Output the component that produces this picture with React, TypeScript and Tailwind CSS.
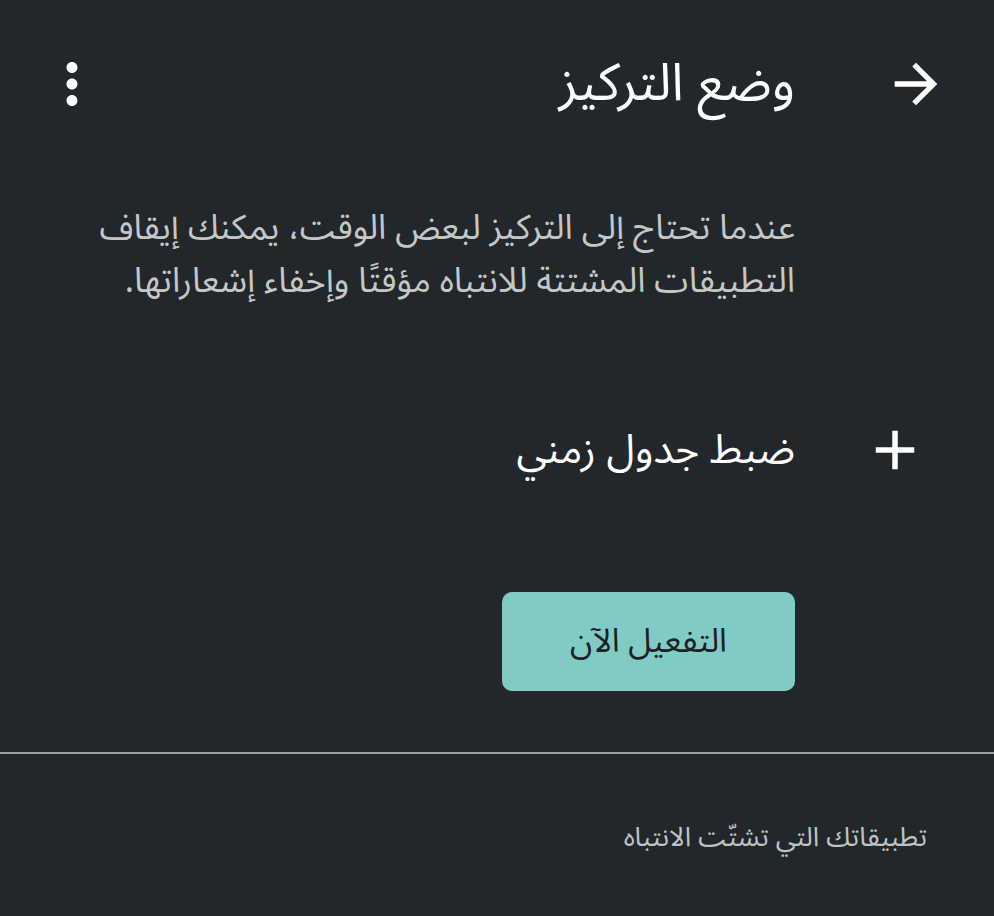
import React from "react";

const font = { fontFamily: '"Noto Sans Arabic", "Noto Sans", "DejaVu Sans", sans-serif' };

function ArrowIcon() {
  return (
    <svg viewBox="0 0 24 24" className="w-[64px] h-[64px]" fill="#ffffff">
      <path d="M12 4l-1.41 1.41L16.17 11H4v2h12.17l-5.58 5.59L12 20l8-8z" />
    </svg>
  );
}

function PlusIcon() {
  return (
    <svg viewBox="0 0 24 24" className="w-[66px] h-[66px]" fill="#ffffff">
      <path d="M19 13h-6v6h-2v-6H5v-2h6V5h2v6h6v2z" />
    </svg>
  );
}

function MoreIcon() {
  return (
    <svg viewBox="0 0 24 24" className="w-[66px] h-[66px]" fill="#ffffff">
      <path d="M12 8c1.1 0 2-.9 2-2s-.9-2-2-2-2 .9-2 2 .9 2 2 2zm0 2c-1.1 0-2 .9-2 2s.9 2 2 2 2-.9 2-2-.9-2-2-2zm0 6c-1.1 0-2 .9-2 2s.9 2 2 2 2-.9 2-2-.9-2-2-2z" />
    </svg>
  );
}

export default function App() {
  return (
    <div dir="rtl" style={font} className="w-[994px] h-[916px] bg-[#22272b] overflow-hidden flex flex-col">
      <div className="mt-[20px] h-[128px] flex items-center pr-[46px] pl-[39px]">
        <ArrowIcon />
        <div className="mr-[89px] text-[52px] leading-none text-white flex-1">وضع التركيز</div>
        <MoreIcon />
      </div>
      <div className="mr-[199px] ml-[60px] mt-[54px] text-[34.5px] leading-[53px] text-[#c4c7c5] whitespace-nowrap">
        <div>عندما تحتاج إلى التركيز لبعض الوقت، يمكنك إيقاف</div>
        <div>التطبيقات المشتتة للانتباه مؤقتًا وإخفاء إشعاراتها.</div>
      </div>
      <div className="mt-[109px] flex items-center pr-[66px] h-[66px]">
        <PlusIcon />
        <div className="mr-[67px] text-[41px] leading-none text-white">ضبط جدول زمني</div>
      </div>
      <div className="mt-[109px] mr-[199px] flex">
        <button className="w-[293px] h-[99px] rounded-[10px] bg-[#80cbc4] text-[#1b2125] text-[33px] leading-none flex items-center justify-center">
          التفعيل الآن
        </button>
      </div>
      <div className="mt-[61px] h-[2px] bg-[#9e9e9e]" />
      <div className="mt-[70px] mr-[67px] text-[27px] leading-none text-[#bfc3c4]">
        تطبيقاتك التي تشتّت الانتباه
      </div>
    </div>
  );
}
